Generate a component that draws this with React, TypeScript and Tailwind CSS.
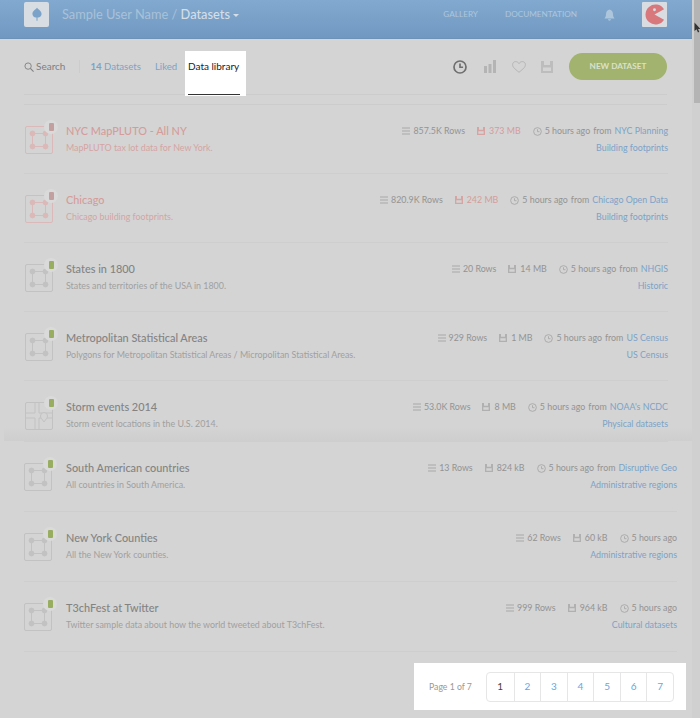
import React from "react";

const Bars = ({ c = "#a8a8a8" }: { c?: string }) => (
  <svg width="8" height="8" viewBox="0 0 8 8" className="shrink-0"><path d="M0 1h8M0 4h8M0 7h8" stroke={c} strokeWidth="1.100" /></svg>
);
const Disk = ({ c = "#a8a8a8", s = 8 }: { c?: string; s?: number }) => (
  <svg width={s} height={s} viewBox="0 0 12 12" className="shrink-0"><path fillRule="evenodd" d="M0 0H3V4H9V0H12V12H0ZM2 6.500V10H10V6.500Z" fill={c} /></svg>
);
const Clock = ({ s = 9, c = "#a8a8a8", w = 1 }: { s?: number; c?: string; w?: number }) => (
  <svg width={s} height={s} viewBox="0 0 10 10" className="shrink-0"><circle cx="5" cy="5" r="4.300" fill="none" stroke={c} strokeWidth={w} /><path d="M5 2.500V5.200H7.200" fill="none" stroke={c} strokeWidth={w} /></svg>
);

const Thumb = ({ kind, color, tag }: { kind: "poly" | "map"; color: string; tag: string }) => (
  <div className="relative w-[28px] h-[28px] shrink-0 rounded-[2px] border" style={{ borderColor: color }}>
    <svg width="26" height="26" viewBox="0 0 26 26" className="block">
      {kind === "poly" ? (
        <g fill="none" stroke={color} strokeWidth="1">
          <rect x="6.500" y="6.500" width="13" height="13" />
          <circle cx="6.500" cy="6.500" r="2.400" fill={color} />
          <circle cx="19.500" cy="6.500" r="2.400" fill={color} />
          <circle cx="6.500" cy="19.500" r="2.400" fill={color} />
          <circle cx="19.500" cy="19.500" r="2.400" fill={color} />
        </g>
      ) : (
        <g fill="none" stroke={color} strokeWidth="1">
          <path d="M0 10H9V0M13 0V10H26M0 15H9V26M13 26V15H26" />
          <path d="M18 19c-2-3-3.500-4-3.500-6a3.500 3.500 0 0 1 7 0c0 2-1.500 3-3.500 6z" fill="#d4d4d4" />
        </g>
      )}
    </svg>
    <span className="absolute -top-[7px] -right-[6px] w-[14px] h-[14px] rounded-full bg-[#dadada] flex items-center justify-center">
      <span className="w-[5px] h-[8px] rounded-[1px]" style={{ backgroundColor: tag }} />
    </span>
  </div>
);

type Row = { title: string; desc: string; rows: string; size: string; from?: string; cat: string; red?: boolean; kind?: "poly" | "map"; h: number; wide?: boolean; band?: boolean };
const rows: Row[] = [
  { title: "NYC MapPLUTO - All NY", desc: "MapPLUTO tax lot data for New York.", rows: "857.5K Rows", size: "373 MB", from: "NYC Planning", cat: "Building footprints", red: true, h: 69 },
  { title: "Chicago", desc: "Chicago building footprints.", rows: "820.9K Rows", size: "242 MB", from: "Chicago Open Data", cat: "Building footprints", red: true, h: 69 },
  { title: "States in 1800", desc: "States and territories of the USA in 1800.", rows: "20 Rows", size: "14 MB", from: "NHGIS", cat: "Historic", h: 69 },
  { title: "Metropolitan Statistical Areas", desc: "Polygons for Metropolitan Statistical Areas / Micropolitan Statistical Areas.", rows: "929 Rows", size: "1 MB", from: "US Census", cat: "US Census", h: 69 },
  { title: "Storm events 2014", desc: "Storm event locations in the U.S. 2014.", rows: "53.0K Rows", size: "8 MB", from: "NOAA's NCDC", cat: "Physical datasets", kind: "map", h: 61, band: true },
  { title: "South American countries", desc: "All countries in South America.", rows: "13 Rows", size: "824 kB", from: "Disruptive Geo", cat: "Administrative regions", h: 70, wide: true },
  { title: "New York Counties", desc: "All the New York counties.", rows: "62 Rows", size: "60 kB", cat: "Administrative regions", h: 70, wide: true },
  { title: "T3chFest at Twitter", desc: "Twitter sample data about how the world tweeted about T3chFest.", rows: "999 Rows", size: "964 kB", cat: "Cultural datasets", h: 70, wide: true },
];

export default function App() {
  return (
    <div className="h-[718px] w-[700px] overflow-hidden flex bg-[#d4d4d4] text-[#8f8f8f] text-[9.600px]" style={{ fontFamily: "Lato, sans-serif" }}>
      <div className="w-[692px] shrink-0">
        <header className="h-[39px] flex items-center pl-[24px] pr-[25px] bg-gradient-to-b from-[#82aad0] to-[#7198c1] border-b border-[#6c92b8]">
          <div className="w-[25px] h-[25px] -mt-[9px] rounded-[2px] bg-[#d7dde2] flex items-center justify-center">
            <svg width="10" height="15" viewBox="0 0 12 16"><path d="M6 0C8 2.500 11.500 4 11.500 7.500C11.500 10 9 12 6.600 11.500V15.500H5.400V11.500C3 12 0.500 10 0.500 7.500C0.500 4 4 2.500 6 0Z" fill="#7ba3ca" /></svg>
          </div>
          <div className="ml-[13px] -mt-[9px] text-[12.800px] text-[#a9c1d8]">Sample User Name / <span className="text-[#d5dee6] font-medium">Datasets</span>
            <span className="inline-block align-middle ml-[3px] border-x-[3px] border-t-[3px] border-x-transparent border-t-[#d5dee6]" />
          </div>
          <div className="ml-auto -mt-[9px] flex items-center text-[8.200px] text-[#aec6dc]">
            <span>GALLERY</span>
            <span className="ml-[27px]">DOCUMENTATION</span>
            <svg className="ml-[27px]" width="11" height="12" viewBox="0 0 11 12"><path d="M5.500 0.500C8 1 9 3 9 5.500C9 8 10 8.500 10.500 9.500H0.500C1 8.500 2 8 2 5.500C2 3 3 1 5.500 0.500ZM4 10.300H7C7 11.200 6.300 11.700 5.500 11.700C4.700 11.700 4 11.200 4 10.300Z" fill="#aec6dc" /></svg>
            <div className="ml-[27px] w-[25px] h-[25px] bg-[#d9dde1] rounded-[1px] flex items-center justify-center">
              <svg width="21" height="21" viewBox="0 0 22 22"><path d="M21 5.500A10.500 10.500 0 1 0 21 16.500L11 11Z" fill="#d8787c" /><circle cx="11" cy="6" r="1.500" fill="#d9dde1" /></svg>
            </div>
          </div>
        </header>

        <div className="pl-[24px] pr-[25px]">
          <div className="h-[56px] flex items-center border-b border-[#cccccc] relative">
            <svg width="10" height="10" viewBox="0 0 11 11"><circle cx="4.500" cy="4.500" r="3.500" fill="none" stroke="#808080" /><path d="M7 7l3.500 3.500" stroke="#808080" strokeWidth="1.200" /></svg>
            <span className="ml-[2px] text-[10px] text-[#7f7f7f]">Search</span>
            <span className="ml-[14px] w-px h-[13px] bg-[#cccccc]" />
            <span className="ml-[10px] mt-[2px] text-[#7ba3c8]"><b className="font-bold">14</b> Datasets</span>
            <span className="ml-[14px] mt-[2px] text-[#7ba3c8]">Liked</span>
            <div className="absolute left-[161px] top-[12px] w-[61px] h-[45px] bg-white">
              <span className="absolute left-[3px] top-[8px] text-[10px] text-[#222]">Data library</span>
              <span className="absolute left-[3px] right-[6px] bottom-[1px] h-px bg-[#333]" />
            </div>
            <div className="ml-auto flex items-center">
              <Clock s={14} c="#6f6f6f" w={1.200} />
              <svg className="ml-[16px]" width="14" height="13" viewBox="0 0 14 13"><path d="M1 6h3v7H1zM5.500 4h3v9h-3zM10 0h3v13h-3z" fill="#b4b4b4" /></svg>
              <svg className="ml-[15px]" width="14" height="12" viewBox="0 0 14 12"><path d="M7 11.300C3 8 .6 6.300.6 3.600C.6 1.800 2 .6 3.600.6C5 .6 6.300 1.300 7 2.600C7.700 1.300 9 .6 10.400.6C12 .6 13.400 1.800 13.400 3.600C13.400 6.300 11 8 7 11.300Z" fill="none" stroke="#b4b4b4" /></svg>
              <span className="ml-[15px]"><Disk s={12} c="#bdbdbd" /></span>
              <button className="ml-[16px] w-[98px] h-[27px] rounded-full bg-[#a1b36e] text-[#dbe1c8] text-[8.200px] font-bold">NEW DATASET</button>
            </div>
          </div>
          <div className="mt-[9px] border-t border-[#cccccc]" />
          {rows.map((r) => {
            const c = r.red ? "#d5a4a3" : "#b0b0b0";
            return (
              <div key={r.title} className={`relative flex items-start border-b border-[#cecece] pt-[19px] ${r.wide ? "-mr-[10px]" : "-mr-[1px]"}`} style={{ height: r.h }}>
                {r.band && <span className="absolute -left-[20px] -right-[24px] bottom-0 h-[14px] bg-gradient-to-b from-transparent to-[#cecece]" />}
                <div className={`relative mt-[2px] ${r.wide ? "" : "ml-[1px]"}`}>
                  <Thumb kind={r.kind ?? "poly"} color={r.red ? "#dbb9b8" : "#c2c2c2"} tag={r.red ? "#c3a0a0" : "#98ad60"} />
                </div>
                <div className={`relative flex-1 min-w-0 ${r.wide ? "ml-[14px]" : "ml-[13px]"}`}>
                  <div className={`text-[10.900px] leading-[14px] font-medium ${r.red ? "text-[#d59c9a]" : "text-[#838383]"}`}>{r.title}</div>
                  <div className={`mt-[4px] text-[8.900px] leading-[12px] ${r.red ? "text-[#d5a4a3]" : "text-[#a0a0a0]"}`}>{r.desc}</div>
                </div>
                <div className="relative flex flex-col items-end text-[8.850px]">
                  <div className="flex items-center h-[14px] text-[#939393]">
                    <Bars />
                    <span className="ml-[3px]">{r.rows}</span>
                    <span className="ml-[12px]"><Disk c={c} /></span>
                    <span className={`ml-[4px] ${r.red ? "text-[#d59c9a]" : ""}`}>{r.size}</span>
                    <span className="ml-[12px]"><Clock /></span>
                    <span className="ml-[3px]">5 hours ago</span>
                    {r.from && <><span className="ml-[3px]">from</span><span className="ml-[3px] text-[#7ba3c8]">{r.from}</span></>}
                  </div>
                  <div className="mt-[4px] leading-[12px] text-[#7ba3c8]">{r.cat}</div>
                </div>
              </div>
            );
          })}
        </div>
        <div className="relative">
          <div className="absolute left-[414px] top-[11px] w-[272px] h-[47px] bg-white flex items-center pl-[15px] text-[#999]">
            <span className="text-[8.700px]">Page 1 of 7</span>
            <div className="ml-[14px] flex h-[30px] border border-[#e6e6e6] rounded-[4px] overflow-hidden text-[#6aa5de] text-[10px]">
              {[1, 2, 3, 4, 5, 6, 7].map((n) => (
                <span key={n} className={`w-[26.600px] flex items-center justify-center ${n > 1 ? "border-l border-[#e6e6e6]" : "text-[#444]"}`}>{n}</span>
              ))}
            </div>
          </div>
        </div>
      </div>
      <div className="flex-1 relative bg-[#d0d0d0]">
        <div className="absolute top-0 left-[2px] right-0 h-[103px] bg-[#b4b4b4]" />
        <svg className="absolute top-[22px] left-[2px]" width="7" height="11" viewBox="0 0 7 11"><path d="M0.500 0.500V9L2.500 7.200L4 10.500L5.300 9.800L4 7H6.500Z" fill="#333" /></svg>
      </div>
    </div>
  );
}
